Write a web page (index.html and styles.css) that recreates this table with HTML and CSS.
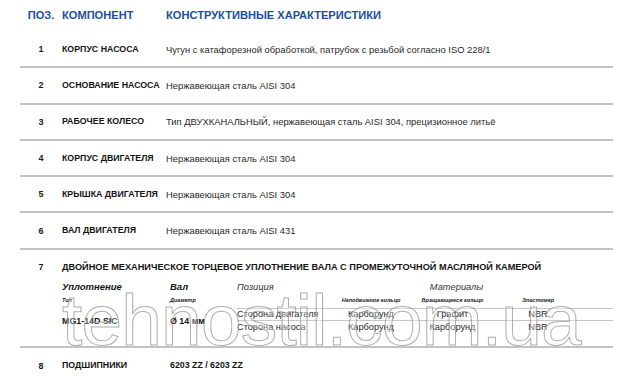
FILE: index.html
```html
<!DOCTYPE html>
<html lang="ru">
<head>
<meta charset="utf-8">
<title>Конструктивные характеристики</title>
<link rel="stylesheet" href="styles.css">
</head>
<body>
<div class="sheet">
  <div class="row head">
    <div class="pos">ПОЗ.</div>
    <div>КОМПОНЕНТ</div>
    <div>КОНСТРУКТИВНЫЕ ХАРАКТЕРИСТИКИ</div>
  </div>
  <div class="row item">
    <div class="pos num">1</div>
    <div class="name">КОРПУС НАСОСА</div>
    <div class="desc">Чугун с катафорезной обработкой, патрубок с резьбой согласно ISO 228/1</div>
  </div>
  <div class="row item">
    <div class="pos num">2</div>
    <div class="name">ОСНОВАНИЕ НАСОСА</div>
    <div class="desc">Нержавеющая сталь AISI 304</div>
  </div>
  <div class="row item">
    <div class="pos num">3</div>
    <div class="name">РАБОЧЕЕ КОЛЕСО</div>
    <div class="desc">Тип ДВУХКАНАЛЬНЫЙ, нержавеющая сталь AISI 304, прецизионное литьё</div>
  </div>
  <div class="row item">
    <div class="pos num">4</div>
    <div class="name">КОРПУС ДВИГАТЕЛЯ</div>
    <div class="desc">Нержавеющая сталь AISI 304</div>
  </div>
  <div class="row item">
    <div class="pos num">5</div>
    <div class="name">КРЫШКА ДВИГАТЕЛЯ</div>
    <div class="desc">Нержавеющая сталь AISI 304</div>
  </div>
  <div class="row item">
    <div class="pos num">6</div>
    <div class="name">ВАЛ ДВИГАТЕЛЯ</div>
    <div class="desc">Нержавеющая сталь AISI 431</div>
  </div>
  <div class="row seal">
    <div class="pos num seal-num">7</div>
    <div class="seal-body">
      <div class="name seal-title">ДВОЙНОЕ МЕХАНИЧЕСКОЕ ТОРЦЕВОЕ УПЛОТНЕНИЕ ВАЛА С ПРОМЕЖУТОЧНОЙ МАСЛЯНОЙ КАМЕРОЙ</div>
      <div class="seal-grid">
        <div class="grp bold">Уплотнение</div>
        <div class="grp bold">Вал</div>
        <div class="grp">Позиция</div>
        <div class="grp mat">Материалы</div>
        <div class="grp"></div>
        <div class="tiny">Тип</div>
        <div class="tiny">Диаметр</div>
        <div class="tiny"></div>
        <div class="tiny c">Неподвижное кольцо</div>
        <div class="tiny c">Вращающееся кольцо</div>
        <div class="tiny c">Эластомер</div>
        <div class="tiny"></div>
        <div class="big r2">MG1-14D SIC</div>
        <div class="big r2">Ø 14 мм</div>
        <div class="cell first">Сторона двигателя</div>
        <div class="cell first c">Карборунд</div>
        <div class="cell first c">Графит</div>
        <div class="cell first c">NBR</div>
        <div class="cell first"></div>
        <div class="cell">Сторона насоса</div>
        <div class="cell c">Карборунд</div>
        <div class="cell c">Карборунд</div>
        <div class="cell c">NBR</div>
        <div class="cell"></div>
      </div>
    </div>
  </div>
  <div class="row last">
    <div class="pos num">8</div>
    <div class="name">ПОДШИПНИКИ</div>
    <div class="name bear">6203 ZZ / 6203 ZZ</div>
  </div>
  <div class="watermark">tehnostil.com.ua</div>
</div>
</body>
</html>
```

FILE: styles.css
```css
* { box-sizing: border-box; margin: 0; padding: 0; }
html, body { background: #fff; }
body {
  margin: 0;
  font-family: "Liberation Sans", Arial, sans-serif;
  color: #1a1a1a;
}
.sheet {
  position: relative;
  width: 640px;
  height: 381px;
  overflow: hidden;
  padding-left: 20px;
}
.row {
  display: grid;
  grid-template-columns: 42px 104px 1fr;
  width: 593px;
  align-items: center;
}
.head {
  height: 32px;
  padding-bottom: 2px;
  color: #1d4f9e;
  font-weight: bold;
  font-size: 11.1px;
  line-height: 12px;
}
.pos { text-align: center; }
.num { font-weight: bold; font-size: 9px; }
.item {
  height: 36.3px;
  border-bottom: 2px solid #c3c3c3;
}
.name {
  font-weight: bold;
  font-size: 8.8px;
  line-height: 11px;
  color: #151515;
}
.desc {
  font-size: 9.4px;
  line-height: 11px;
  color: #2a2a2a;
}
.seal {
  height: 98px;
  border-bottom: 2px solid #c3c3c3;
  align-items: start;
}
.seal-num {
  padding-top: 11px;
  line-height: 12px;
}
.seal-body {
  grid-column: 2 / 4;
  padding-top: 11px;
  display: flex;
  flex-direction: column;
}
.seal-title { line-height: 12px; font-size: 9.2px; white-space: nowrap; }
.seal-grid {
  margin-top: 8px;
  display: grid;
  grid-template-columns: 108px 67px 100px 68px 95px 76px 1fr;
  grid-template-rows: 12px 15px 13px 13px;
  align-items: center;
}
.grp {
  font-style: italic;
  font-size: 9.3px;
  line-height: 12px;
  color: #333;
}
.grp.bold { font-weight: bold; color: #151515; font-size: 9.5px; }
.mat { grid-column: 4 / 7; text-align: center; }
.tiny {
  font-style: italic;
  font-weight: bold;
  font-size: 5.5px;
  line-height: 8px;
  color: #222;
  align-self: start;
  padding-top: 3px;
}
.c { text-align: center; }
.big {
  font-weight: bold;
  font-size: 8.9px;
  color: #151515;
}
.r2 { grid-row: 3 / 5; }
.cell {
  font-size: 9.2px;
  line-height: 12px;
  color: #2a2a2a;
  height: 13px;
}
.cell.first {
  border-top: 1px solid #c8c8c8;
  border-bottom: 1px solid #c8c8c8;
  line-height: 11px;
}
.last { height: 36px; }
.bear { padding-left: 4px; }
.watermark {
  position: absolute;
  left: 62px;
  top: 283px;
  font-family: "Liberation Sans", Arial, sans-serif;
  font-size: 73px;
  line-height: 1;
  letter-spacing: -0.8px;
  color: rgba(255, 255, 255, 0.3);
  -webkit-text-stroke: 1px rgba(140, 140, 140, 0.7);
  pointer-events: none;
  white-space: nowrap;
}
```
